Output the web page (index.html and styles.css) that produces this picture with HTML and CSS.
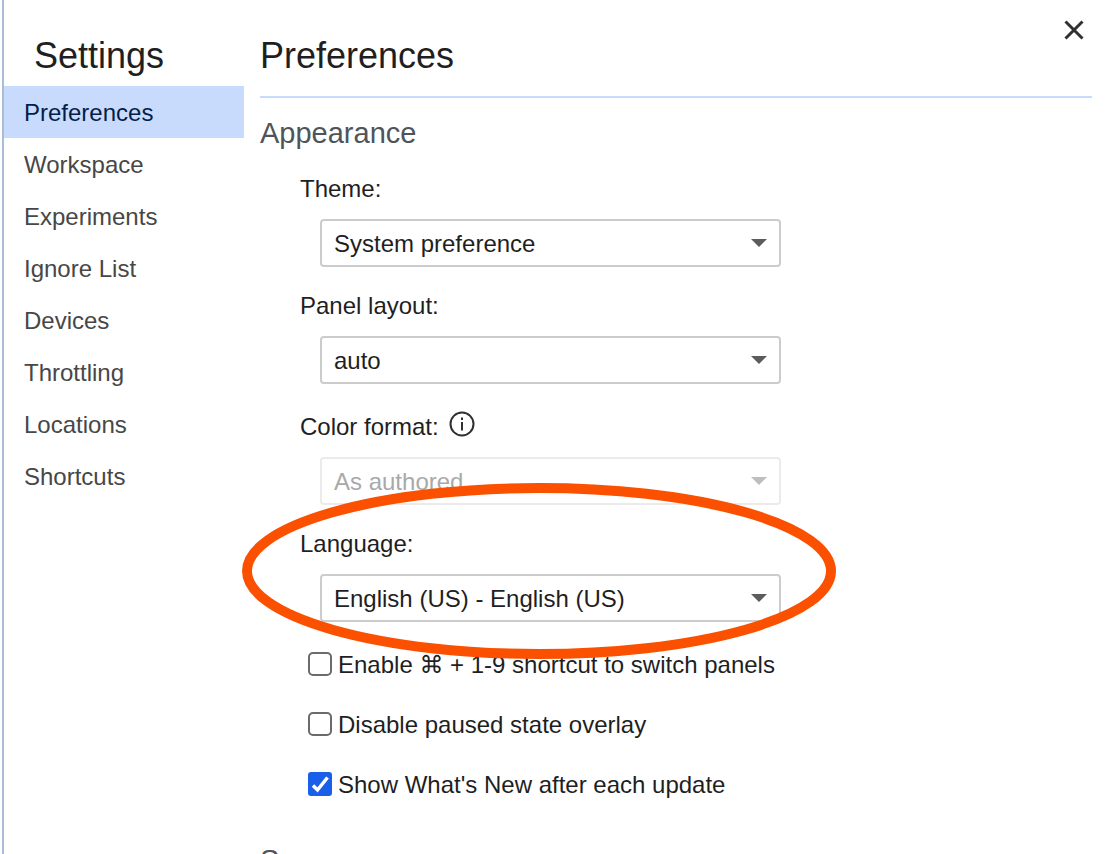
FILE: index.html
```html
<!DOCTYPE html>
<html lang="en">
<head>
<meta charset="utf-8">
<title>Settings</title>
<link rel="stylesheet" href="styles.css">
</head>
<body>
<div class="settings">
  <aside class="sidebar">
    <h1 class="title sidebar-title">Settings</h1>
    <nav class="nav">
      <a class="nav-item selected" href="#" aria-current="page">Preferences</a>
      <a class="nav-item" href="#">Workspace</a>
      <a class="nav-item" href="#">Experiments</a>
      <a class="nav-item" href="#">Ignore List</a>
      <a class="nav-item" href="#">Devices</a>
      <a class="nav-item" href="#">Throttling</a>
      <a class="nav-item" href="#">Locations</a>
      <a class="nav-item" href="#">Shortcuts</a>
    </nav>
  </aside>
  <main class="content">
    <header class="header">
      <h2 class="title">Preferences</h2>
      <button class="close" type="button" aria-label="Close">
        <svg class="icon" width="24" height="24" viewBox="0 0 24 24"><path d="M3.500 3.500 20.500 20.500M20.500 3.500 3.500 20.500"/></svg>
      </button>
    </header>
    <section class="section">
      <h3 class="section-title">Appearance</h3>
      <div class="fields">
        <div class="field">
          <label class="label" for="theme">Theme:</label>
          <div class="select-box">
            <select class="select" id="theme"><option>System preference</option></select>
            <svg class="arrow" width="16" height="8" viewBox="0 0 16 8"><path d="M0 0h16L8 8z"/></svg>
          </div>
        </div>
        <div class="field">
          <label class="label" for="layout">Panel layout:</label>
          <div class="select-box">
            <select class="select" id="layout"><option>auto</option></select>
            <svg class="arrow" width="16" height="8" viewBox="0 0 16 8"><path d="M0 0h16L8 8z"/></svg>
          </div>
        </div>
        <div class="field">
          <div class="label-row">
            <label class="label" for="color">Color format:</label>
            <svg class="info" width="26" height="26" viewBox="0 0 26 26"><circle class="info-ring" cx="13" cy="13" r="11.500"/><path d="M12 11h2v8.500h-2zM12 6.500h2v2.500h-2z"/></svg>
          </div>
          <div class="select-box disabled">
            <select class="select" id="color" disabled><option>As authored</option></select>
            <svg class="arrow" width="16" height="8" viewBox="0 0 16 8"><path d="M0 0h16L8 8z"/></svg>
          </div>
        </div>
        <div class="field highlighted">
          <label class="label" for="language">Language:</label>
          <div class="select-box">
            <select class="select" id="language"><option>English (US) - English (US)</option></select>
            <svg class="arrow" width="16" height="8" viewBox="0 0 16 8"><path d="M0 0h16L8 8z"/></svg>
          </div>
          <svg class="highlight" width="594" height="176" viewBox="0 0 594 176"><ellipse cx="297" cy="88" rx="292" ry="83"/></svg>
        </div>
      </div>
      <div class="checks">
        <div class="check">
          <span class="box-wrap"><input class="box" id="shortcut" type="checkbox"><svg class="tick" width="24" height="24" viewBox="0 0 24 24"><path d="M5 13.500 9.500 18 19.500 5.500"/></svg></span>
          <label class="check-label" for="shortcut">Enable <span class="key">⌘</span> + 1-9 shortcut to switch panels</label>
        </div>
        <div class="check">
          <span class="box-wrap"><input class="box" id="overlay" type="checkbox"><svg class="tick" width="24" height="24" viewBox="0 0 24 24"><path d="M5 13.500 9.500 18 19.500 5.500"/></svg></span>
          <label class="check-label" for="overlay">Disable paused state overlay</label>
        </div>
        <div class="check">
          <span class="box-wrap"><input class="box" id="news" type="checkbox" checked><svg class="tick" width="24" height="24" viewBox="0 0 24 24"><path d="M5 13.500 9.500 18 19.500 5.500"/></svg></span>
          <label class="check-label" for="news">Show What's New after each update</label>
        </div>
      </div>
    </section>
    <section class="section">
      <h3 class="section-title">Sources</h3>
    </section>
  </main>
</div>
</body>
</html>
```
FILE: styles.css
```css
* {
  box-sizing: border-box;
}

body {
  margin: 0;
  background: #fff;
  color: #1f1f1f;
  font: 24px/28px "Liberation Sans", Arial, sans-serif;
}

.settings {
  display: flex;
  height: 100vh;
  margin-left: 2px;
  border-left: 2px solid #a8bbd8;
  overflow: hidden;
}

.sidebar {
  flex: 0 0 240px;
}

.title {
  margin: 0;
  font-size: 36px;
  line-height: 40px;
  font-weight: 400;
}

.sidebar-title {
  padding: 36px 30px 10px;
}

.nav {
  display: flex;
  flex-direction: column;
}

.nav-item {
  padding: 13px 20px 11px;
  color: #474747;
  text-decoration: none;
}

.nav-item.selected {
  background: #c9dbfd;
  color: #041e49;
}

.content {
  flex: 1;
  min-width: 0;
  padding: 0 18px 0 16px;
}

.header {
  display: flex;
  justify-content: space-between;
  align-items: flex-start;
  padding-bottom: 20px;
  border-bottom: 2px solid #c9dbfd;
}

.header .title {
  padding-top: 36px;
}

.close {
  display: flex;
  margin: 18px 6px 0 0;
  padding: 0;
  border: 0;
  background: none;
}

.icon {
  fill: none;
  stroke: #303030;
  stroke-width: 3;
}

.section {
  padding: 19px 0 26px;
}

.section-title {
  margin: 0;
  color: #50545a;
  font-size: 29px;
  line-height: 32px;
  font-weight: 400;
}

.fields {
  display: flex;
  flex-direction: column;
  gap: 25px;
  padding: 26px 0 27px 40px;
}

.field {
  display: flex;
  flex-direction: column;
  align-items: flex-start;
  gap: 16px;
}

.label-row {
  display: flex;
  align-items: flex-end;
  gap: 10px;
  height: 32px;
}

.info {
  margin-bottom: 4px;
  fill: #303030;
}

.info-ring {
  fill: none;
  stroke: #303030;
  stroke-width: 2;
}

.select-box {
  display: grid;
  align-items: center;
  width: 100%;
  max-width: 461px;
  margin-left: 20px;
}

.select,
.arrow {
  grid-area: 1 / 1;
}

.select {
  appearance: none;
  width: 100%;
  height: 48px;
  padding: 2px 40px 0 12px;
  border: 2px solid #ccc;
  border-radius: 4px;
  background: #fff;
  color: #1f1f1f;
  font: inherit;
  opacity: 1;
}

.arrow {
  justify-self: end;
  margin-right: 14px;
  fill: #5c5c5c;
  pointer-events: none;
}

.disabled .select {
  border-color: #ebebeb;
  color: #a9a9a9;
}

.disabled .arrow {
  fill: #bebebe;
}

.highlighted {
  position: relative;
}

/* Ring drawn over the language setting and its neighbours */
.highlight {
  position: absolute;
  top: -47px;
  left: -58px;
  fill: none;
  stroke: #fa5000;
  stroke-width: 10;
  pointer-events: none;
}

.checks {
  display: flex;
  flex-direction: column;
  gap: 30px;
  padding-left: 48px;
}

.check {
  display: flex;
  align-items: center;
  gap: 6px;
}

.check-label {
  padding-top: 2px;
}

.box-wrap {
  display: grid;
  flex: none;
}

.box,
.tick {
  grid-area: 1 / 1;
}

.box {
  appearance: none;
  width: 24px;
  height: 24px;
  margin: 0;
  border: 2px solid #6b6b6b;
  border-radius: 5px;
  background: #fff;
}

.box:checked {
  border-color: #1a5fe9;
  border-radius: 3px;
  background: #1a5fe9;
}

.tick {
  fill: none;
  stroke: #fff;
  stroke-width: 3.5;
  pointer-events: none;
  visibility: hidden;
}

.box:checked + .tick {
  visibility: visible;
}

.key {
  font-family: "DejaVu Sans", sans-serif;
  line-height: 20px;
}
```
